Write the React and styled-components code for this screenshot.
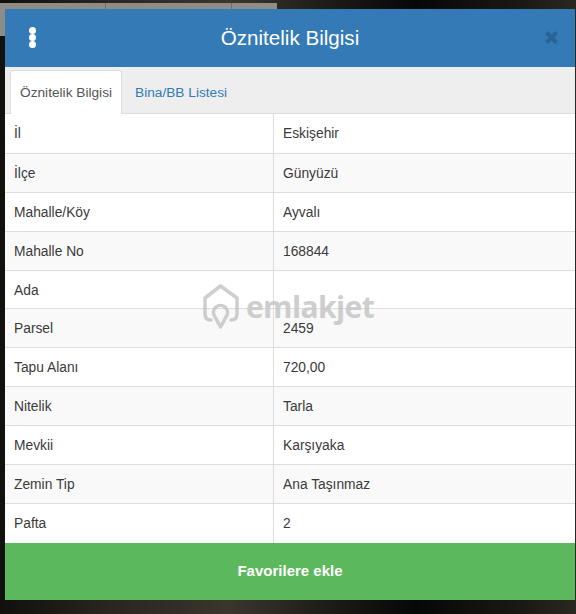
import React from 'react';
import styled, { createGlobalStyle } from 'styled-components';

const GlobalStyle = createGlobalStyle`
  html, body {
    margin: 0;
    padding: 0;
    height: 100%;
    overflow: hidden;
  }
  body {
    font-family: "Liberation Sans", Arial, sans-serif;
    color: #333;
  }
`;

const Page = styled.div`
  width: 576px;
  height: 614px;
  box-sizing: border-box;
  padding: 9px 1px 14px 5px;
  background:
    linear-gradient(#6f6d68, #6f6d68) 105px 3px / 1px 6px no-repeat,
    linear-gradient(#6f6d68, #6f6d68) 231px 3px / 1px 6px no-repeat,
    linear-gradient(#8e8c86, #8e8c86) 0 3px / 277px 33px no-repeat,
    linear-gradient(90deg, #11100d 0%, #2b2620 20%, #3a362e 40%, #1c1a16 58%, #060708 72%, #1a1814 90%, #2b2721 100%);
`;

const Modal = styled.div`
  position: relative;
  display: flex;
  flex-direction: column;
  height: 591px;
  background: #fff;
`;

const Header = styled.header`
  display: flex;
  align-items: center;
  justify-content: space-between;
  height: 58px;
  box-sizing: border-box;
  padding: 0 16px 1px 24px;
  background: #337ab7;
`;

const MenuDots = styled.div`
  display: flex;
  flex-direction: column;
  gap: 0;
`;

const Dot = styled.span`
  width: 7px;
  height: 7px;
  border-radius: 50%;
  background: #fff;
`;

const Title = styled.h1`
  margin: 0;
  font-size: 20.6px;
  font-weight: 400;
  color: #fff;
`;

const Close = styled.svg`
  width: 15px;
  height: 15px;
`;

const Tabs = styled.nav`
  display: flex;
  height: 47px;
  box-sizing: border-box;
  padding: 3px 0 0 5px;
  background: #eee;
  border-bottom: 1px solid #ddd;
`;

const Tab = styled.div`
  height: 44px;
  box-sizing: border-box;
  padding: 0 ${(p) => (p.$active ? '9px' : '12px')};
  display: flex;
  align-items: center;
  font-size: 13.7px;
  color: ${(p) => (p.$active ? '#555' : '#337ab7')};
  background: ${(p) => (p.$active ? '#fff' : 'transparent')};
  border: 1px solid ${(p) => (p.$active ? '#ddd' : 'transparent')};
  border-bottom: 0;
  border-radius: 4px 4px 0 0;
`;

const Table = styled.div`
  flex: 1;
  display: flex;
  flex-direction: column;
`;

const Row = styled.div`
  display: grid;
  grid-template-columns: 269px 1fr;
  height: 38.9px;
  box-sizing: border-box;
  border-top: ${(p) => (p.$first ? '0' : '1px solid #ddd')};
  background: ${(p) => (p.$striped ? '#f9f9f9' : '#fff')};
  font-size: 13.8px;
  line-height: 39px;
  color: #3a3a3a;
`;

const Label = styled.div`
  padding-left: 9px;
  border-right: 1px solid #ddd;
`;

const Value = styled.div`
  padding-left: 9px;
`;

const Watermark = styled.div`
  position: absolute;
  left: 198px;
  top: 275px;
  display: flex;
  align-items: center;
  gap: 7px;
  color: #c6c6c6;
  opacity: 0.85;
  pointer-events: none;
`;

const WatermarkText = styled.span`
  font-family: "Open Sans", sans-serif;
  font-size: 30px;
  font-weight: 700;
  letter-spacing: -0.6px;
  line-height: 1;
`;

const AddButton = styled.button`
  height: 57px;
  border: 0;
  padding: 0 0 2px;
  background: #5cb85c;
  color: #fff;
  font-family: inherit;
  font-size: 15px;
  font-weight: 700;
`;

const rows = [
  ['İl', 'Eskişehir'],
  ['İlçe', 'Günyüzü'],
  ['Mahalle/Köy', 'Ayvalı'],
  ['Mahalle No', '168844'],
  ['Ada', ''],
  ['Parsel', '2459'],
  ['Tapu Alanı', '720,00'],
  ['Nitelik', 'Tarla'],
  ['Mevkii', 'Karşıyaka'],
  ['Zemin Tip', 'Ana Taşınmaz'],
  ['Pafta', '2'],
];

export default function App() {
  return (
    <Page>
      <GlobalStyle />
      <Modal>
        <Header>
          <MenuDots>
            <Dot />
            <Dot />
            <Dot />
          </MenuDots>
          <Title>Öznitelik Bilgisi</Title>
          <Close viewBox="0 0 15 15">
            <path d="M2.5 2.5 L12.5 12.5 M12.5 2.5 L2.5 12.5" stroke="#2a6497" strokeWidth="4" />
          </Close>
        </Header>
        <Tabs>
          <Tab $active>Öznitelik Bilgisi</Tab>
          <Tab>Bina/BB Listesi</Tab>
        </Tabs>
        <Table>
          {rows.map(([label, value], i) => (
            <Row key={label} $first={i === 0} $striped={i % 2 === 1}>
              <Label>{label}</Label>
              <Value>{value}</Value>
            </Row>
          ))}
        </Table>
        <AddButton>Favorilere ekle</AddButton>
        <Watermark>
          <svg width="36" height="46" viewBox="0 0 36 46" fill="none">
            <path d="M8 36 C4 36 2 34 2 30 V14 L17.5 2 L34 14 V30 C34 34 32 36 28 36" stroke="currentColor" strokeWidth="3.5" strokeLinejoin="round" strokeLinecap="round" />
            <path d="M17.5 43 L11.5 32 A7 7 0 1 1 23.5 32 Z" stroke="currentColor" strokeWidth="3.5" strokeLinejoin="round" />
          </svg>
          <WatermarkText>emlakjet</WatermarkText>
        </Watermark>
      </Modal>
    </Page>
  );
}
